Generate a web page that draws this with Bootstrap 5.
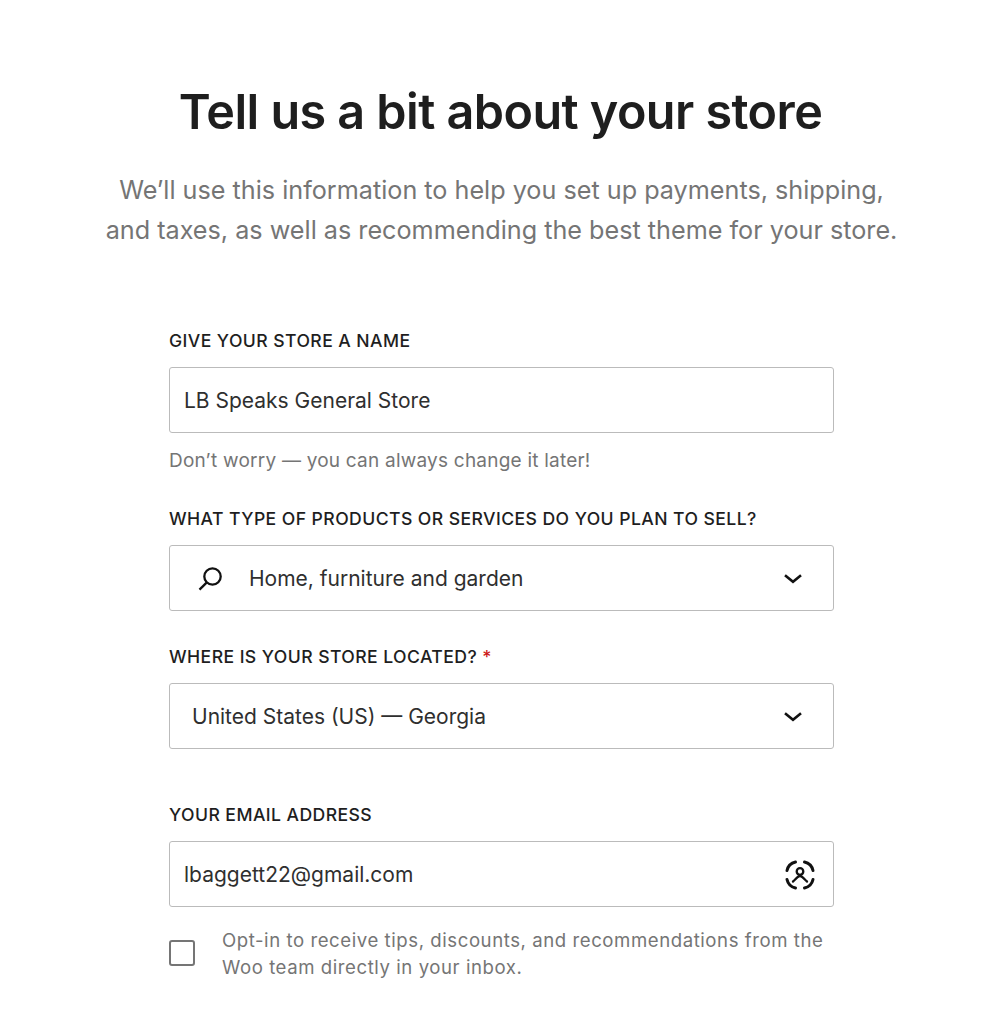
<!DOCTYPE html>
<html lang="en">
<head>
<meta charset="utf-8">
<title>Store details</title>
<link href="https://cdn.jsdelivr.net/npm/bootstrap@5.3.0/dist/css/bootstrap.min.css" rel="stylesheet">
<style>
body{font-family:Inter,"Liberation Sans",sans-serif;color:#1e1e1e;background:#fff;margin:0}
.page-wrap{width:996px;height:1024px;overflow:hidden;padding-top:82px}
.hero-title{font-size:48.5px;font-weight:600;line-height:60px;letter-spacing:-.55px;text-align:center;margin:0 0 29px;padding-left:5px}
.hero-sub{font-size:25.2px;line-height:39.5px;color:#757575;text-align:center;margin:0 0 81px;padding-left:7px}
.form-col{width:665px;margin-left:169px}
.fld-label{font-size:17.6px;font-weight:500;line-height:20px;letter-spacing:.43px;text-transform:uppercase;display:block;margin:0 0 16px;color:#1e1e1e}
.fld-box{height:66px;border:1px solid #bbb;border-radius:3px;font-size:21px;color:#2f2f2f;display:flex;align-items:center;padding:2px 14px 0}
.fld-help{font-size:19px;line-height:24px;letter-spacing:.22px;color:#757575;margin:16px 0 36px}
.req{color:#cc1818}
.sel-gap{margin-bottom:36px}
.sel-pad{padding-left:22px}
.mail-label{margin-top:56px}
.sel-search{margin:0 26px 0 13px;flex:none}
.sel-chev{margin-right:16px;flex:none}
.face-ico{margin-right:4px;flex:none}
.opt-row{margin-top:20px}
.opt-box{width:26px;height:26px;border:2px solid #757575;border-radius:3px;flex:none;margin-top:13px}
.opt-text{font-size:18.6px;line-height:27px;color:#757575;letter-spacing:.56px;margin-left:27px}
</style>
</head>
<body>
<div class="page-wrap">
<h1 class="hero-title">Tell us a bit about your store</h1>
<p class="hero-sub">We’ll use this information to help you set up payments, shipping,<br>and taxes, as well as recommending the best theme for your store.</p>
<form class="form-col">
<label class="fld-label">Give your store a name</label>
<div class="fld-box">LB Speaks General Store</div>
<p class="fld-help">Don’t worry — you can always change it later!</p>
<label class="fld-label">What type of products or services do you plan to sell?</label>
<div class="fld-box justify-content-between sel-gap"><span class="d-flex align-items-center"><svg width="26" height="26" viewBox="0 0 26 26" fill="none" stroke="#111" stroke-width="2.3" class="sel-search"><circle cx="15.5" cy="10.5" r="8.2"/><path d="M9.6 16.6L2.5 23.6"/></svg>Home, furniture and garden</span><svg width="20" height="12" viewBox="0 0 20 12" fill="none" stroke="#111" stroke-width="2.6" class="sel-chev"><path d="M2 2.2l8 6.5 8-6.5"/></svg></div>
<label class="fld-label">Where is your store located? <span class="req">*</span></label>
<div class="fld-box justify-content-between sel-pad"><span>United States (US) — Georgia</span><svg width="20" height="12" viewBox="0 0 20 12" fill="none" stroke="#111" stroke-width="2.6" class="sel-chev"><path d="M2 2.2l8 6.5 8-6.5"/></svg></div>
<label class="fld-label mail-label">Your email address</label>
<div class="fld-box justify-content-between">lbaggett22@gmail.com<svg width="30" height="30" viewBox="0 0 30 30" fill="none" stroke="#111" stroke-width="3" stroke-linecap="round" class="face-ico"><path d="M2 10.5C3 6 6 3 10.5 2M19.5 2C24 3 27 6 28 10.5M2 19.5C3 24 6 27 10.5 28M19.5 28C24 27 27 24 28 19.5"/><circle cx="15" cy="11.5" r="3.3" stroke-width="2.3"/><path d="M8 21.5c2-1.5 4.500-5.500 7-5.500s5 4 7 5.500" stroke-width="2.3"/></svg></div>
<div class="d-flex opt-row"><div class="opt-box"></div><div class="opt-text">Opt-in to receive tips, discounts, and recommendations from the Woo team directly in your inbox.</div></div>
</form>
</div>
</body>
</html>
